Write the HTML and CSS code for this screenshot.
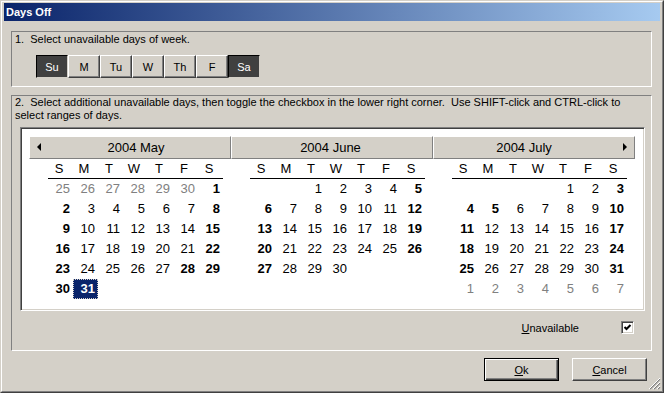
FILE: index.html
```html
<!DOCTYPE html>
<html lang="en">
<head>
    <meta charset="UTF-8">
    <title>Days Off</title>
    <link rel="stylesheet" href="styles.css">
</head>
<body>

<div class="window">
    <div class="window-inner">
        <div class="titlebar">Days Off</div>

        <div class="content">
            <!-- step 1: weekdays -->
            <div class="group group-week">
                <div class="group-label">1.  Select unavailable days of week.</div>
                <div class="weekdays">
                    <button class="day-btn on">Su</button>
                    <button class="day-btn">M</button>
                    <button class="day-btn">Tu</button>
                    <button class="day-btn">W</button>
                    <button class="day-btn">Th</button>
                    <button class="day-btn">F</button>
                    <button class="day-btn on">Sa</button>
                </div>
            </div>

            <!-- step 2: calendar -->
            <div class="group group-days">
                <div class="group-label">2.  Select additional unavailable days, then toggle the checkbox in the lower right corner.  Use SHIFT-click and CTRL-click to<br>select ranges of days.</div>
                <div class="calendar" id="calendar"></div>
                <div class="unavail">
                    <span class="unavail-label"><u>U</u>navailable</span>
                    <span class="checkbox">
                        <svg width="9" height="9" viewBox="0 0 9 9"><polyline points="1.5,4 3.5,6 7.5,2" fill="none" stroke="#000" stroke-width="2"/></svg>
                    </span>
                </div>
            </div>

            <div class="buttons">
                <button class="btn btn-default"><u>O</u>k</button>
                <button class="btn"><u>C</u>ancel</button>
            </div>
        </div>
    </div>

    <svg class="grip" width="12" height="12" viewBox="0 0 12 12">
        <path d="M11 1 L1 11 M11 5 L5 11 M11 9 L9 11" stroke="#808080" stroke-width="1.2"/>
        <path d="M11 0 L0 11 M11 4 L4 11 M11 8 L8 11" stroke="#fff" stroke-width="1"/>
    </svg>
</div>

<script>
    // first = weekday of the 1st (0 = Sunday)
    const months = [
        { name: '2004 May', first: 6, days: 31, lead: [25, 26, 27, 28, 29, 30], trail: 0, bold: [28, 31], selected: 31, cls: 'm-first' },
        { name: '2004 June', first: 2, days: 30, lead: [], trail: 0, bold: [], cls: 'm-mid' },
        { name: '2004 July', first: 4, days: 31, lead: [], trail: 7, bold: [5], cls: 'm-last' }
    ];

    const cal = document.getElementById('calendar');

    months.forEach(function (m) {
        let html = '<div class="month ' + m.cls + '">';
        html += '<div class="month-head">' + m.name;
        if (m.cls === 'm-first') html += '<span class="arrow arrow-left"></span>';
        if (m.cls === 'm-last') html += '<span class="arrow arrow-right"></span>';
        html += '</div>';

        html += '<div class="names">';
        ['S', 'M', 'T', 'W', 'T', 'F', 'S'].forEach(function (n) {
            html += '<span>' + n + '</span>';
        });
        html += '</div><div class="days">';

        if (m.lead.length) {
            m.lead.forEach(function (d) { html += '<span class="other">' + d + '</span>'; });
        } else {
            for (let i = 0; i < m.first; i++) html += '<span></span>';
        }

        for (let d = 1; d <= m.days; d++) {
            let wd = (m.first + d - 1) % 7;
            let cls = [];
            if (wd === 0 || wd === 6 || m.bold.indexOf(d) >= 0) cls.push('bold');
            if (m.selected === d) cls.push('sel');
            html += '<span class="' + cls.join(' ') + '">' + d + '</span>';
        }

        for (let d = 1; d <= m.trail; d++) {
            html += '<span class="other">' + d + '</span>';
        }

        html += '</div></div>';
        cal.innerHTML += html;
    });
</script>
</body>
</html>
```

FILE: styles.css
```css
body {
    margin: 0;
    font-family: "Liberation Sans", Arial, sans-serif;
    font-size: 11px;
    color: #000;
    background-color: #d4d0c8;
}

.window {
    position: relative;
    width: 664px;
    height: 393px;
    box-sizing: border-box;
    border: 1px solid;
    border-color: #d4d0c8 #404040 #404040 #d4d0c8;
}

.window-inner {
    height: 100%;
    box-sizing: border-box;
    border: 1px solid;
    border-color: #fff #808080 #808080 #fff;
    padding: 1px 2px 2px 2px;
}

.titlebar {
    height: 18px;
    line-height: 18px;
    padding-left: 2px;
    background: linear-gradient(to right, #0a246a, #a6caf0);
    color: #fff;
    font-weight: bold;
    font-size: 11px;
}

.content {
    padding: 10px 8px 0 7px;
}

/* group boxes */
.group {
    border: 1px solid;
    border-color: #808080 #fff #fff #808080;
}

.group-label {
    padding-left: 3px;
    line-height: 13px;
    white-space: pre-wrap;
}

.group-week {
    padding: 1px 0 8px 0;
}

.weekdays {
    display: flex;
    margin: 9px 0 0 24px;
}

.day-btn {
    width: 32px;
    height: 23px;
    padding: 0;
    font-family: inherit;
    font-size: 11px;
    background-color: #d4d0c8;
    color: #000;
    border: 1px solid;
    border-color: #fff #404040 #404040 #fff;
    box-shadow: inset -1px -1px #808080;
}

.day-btn.on {
    background-color: #404040;
    color: #fff;
    border-color: #000 #d4d0c8 #d4d0c8 #000;
    box-shadow: none;
}

.group-days {
    margin-top: 8px;
    padding-bottom: 16px;
}

/* calendar */
.calendar {
    display: flex;
    height: 184px;
    box-sizing: border-box;
    margin: 5px 6px 0 8px;
    padding: 8px;
    background-color: #fff;
    border: 1px solid;
    border-color: #808080 #fff #fff #808080;
    box-shadow: inset 1px 1px #404040, inset -1px -1px #d4d0c8;
    font-size: 13px;
}

.month {
    width: 202px;
}

.month-head {
    position: relative;
    height: 23px;
    box-sizing: border-box;
    line-height: 21px;
    text-align: center;
    background-color: #d4d0c8;
    border: 1px solid;
    border-color: #fff #808080 #808080 #fff;
}

.m-first .month-head { padding-left: 12px; }
.m-mid .month-head { padding-right: 3px; }
.m-last .month-head { padding-right: 20px; }

.arrow {
    position: absolute;
    top: 6px;
    width: 0;
    height: 0;
    border-top: 4px solid transparent;
    border-bottom: 4px solid transparent;
}

.arrow-left {
    left: 7px;
    border-right: 4px solid #000;
}

.arrow-right {
    right: 7px;
    border-left: 4px solid #000;
}

.names, .days {
    display: grid;
    grid-template-columns: repeat(7, 25px);
    margin-left: 19px;
    width: 175px;
}

.names {
    height: 20px;
    box-sizing: border-box;
    border-bottom: 1px solid #000;
    line-height: 19px;
}

.names span {
    text-align: center;
    padding-right: 3px;
}

.days {
    grid-auto-rows: 20px;
    line-height: 20px;
}

.days span {
    text-align: right;
    padding-right: 3px;
}

.days .bold {
    font-weight: bold;
}

.days .other {
    color: #808080;
}

.days .sel {
    background-color: #0a246a;
    color: #fff;
    outline: 1px dotted #d4d0c8;
    outline-offset: -1px;
}

/* unavailable row */
.unavail {
    display: flex;
    justify-content: flex-end;
    align-items: center;
    height: 13px;
    margin: 10px 17px 0 0;
}

.unavail-label {
    margin-right: 42px;
}

.checkbox {
    display: flex;
    align-items: center;
    justify-content: center;
    width: 13px;
    height: 13px;
    box-sizing: border-box;
    background-color: #fff;
    border: 1px solid;
    border-color: #808080 #fff #fff #808080;
    box-shadow: inset 1px 1px #404040, inset -1px -1px #d4d0c8;
}

/* dialog buttons */
.buttons {
    display: flex;
    justify-content: flex-end;
    gap: 13px;
    margin: 7px 5px 0 0;
}

.btn {
    width: 75px;
    height: 23px;
    padding: 0;
    font-family: inherit;
    font-size: 11px;
    color: #000;
    background-color: #d4d0c8;
    border: 1px solid;
    border-color: #fff #404040 #404040 #fff;
    box-shadow: inset -1px -1px #808080;
}

.btn-default {
    border-color: #000;
    box-shadow: inset 1px 1px #fff, inset -1px -1px #404040, inset -2px -2px #808080;
}

.grip {
    position: absolute;
    right: 2px;
    bottom: 2px;
}
```
